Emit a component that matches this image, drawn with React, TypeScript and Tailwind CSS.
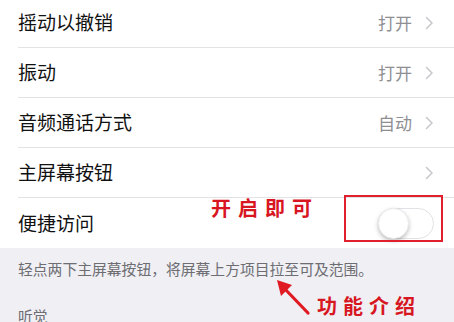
import React from "react";

const font = { fontFamily: '"Noto Sans CJK SC", "Noto Sans", sans-serif' };

function Chevron() {
  return (
    <svg width="9" height="14" viewBox="0 0 9 14" className="ml-[13px]">
      <path d="M1.5 1.5 L7 7 L1.5 12.5" fill="none" stroke="#c7c7cc" strokeWidth="1.5" strokeLinecap="round" strokeLinejoin="round" />
    </svg>
  );
}

function Row({ label, value, chevron = true, children, first = false, last = false }: { label: string; value?: string; chevron?: boolean; children?: React.ReactNode; first?: boolean; last?: boolean }) {
  return (
    <div className={`pl-[18px] ${first ? "mt-[-2px]" : ""}`}>
      <div className={`flex h-[50px] items-center pr-[20px] ${last ? "" : "border-b border-[#e3e3e6]"}`}>
        <span className="flex-1 text-[19px] text-[#111]">{label}</span>
        {value && <span className="text-[17px] text-[#8e8e93]">{value}</span>}
        {chevron && <Chevron />}
        {children}
      </div>
    </div>
  );
}

export default function App() {
  return (
    <div className="relative h-[322px] w-[454px] overflow-hidden bg-[#efeff4]" style={font}>
      <div className="bg-white">
        <Row label="摇动以撤销" value="打开" first />
        <Row label="振动" value="打开" />
        <Row label="音频通话方式" value="自动" />
        <Row label="主屏幕按钮" />
        <Row label="便捷访问" chevron={false} last>
          <div className="relative h-[31px] w-[56px] rounded-full border border-[#e2e2e6] bg-white">
            <div className="absolute left-[-1px] top-[-1px] h-[31px] w-[31px] rounded-full border border-[#ececee] bg-white shadow-[0_2px_4px_rgba(0,0,0,0.25)]" />
          </div>
        </Row>
      </div>
      <div className="px-[18px] pt-[11px] text-[14.8px] leading-[20px] text-[#6d6d72]">
        轻点两下主屏幕按钮，将屏幕上方项目拉至可及范围。
      </div>
      <div className="px-[18px] pt-[27px] text-[14.8px] leading-[20px] text-[#6d6d72]">听觉</div>

      {/* annotations */}
      <div className="absolute left-[344px] top-[195px] h-[47px] w-[99px] border-[2px] border-[#e0202c]" />
      <div className="absolute left-[211px] top-[196px] text-[20px] font-bold leading-[24px] tracking-[7px] text-[#d8161f]">开启即可</div>
      <div className="absolute left-[317px] top-[294px] text-[20px] font-bold leading-[24px] tracking-[6px] text-[#d8161f]">功能介绍</div>
      <svg className="absolute left-[270px] top-[274px]" width="46" height="46" viewBox="0 0 46 46">
        <line x1="38" y1="39" x2="14" y2="14" stroke="#e01a22" strokeWidth="3.2" strokeLinecap="round" />
        <polygon points="7,6 22,11 11,22" fill="#e01a22" />
      </svg>
    </div>
  );
}
